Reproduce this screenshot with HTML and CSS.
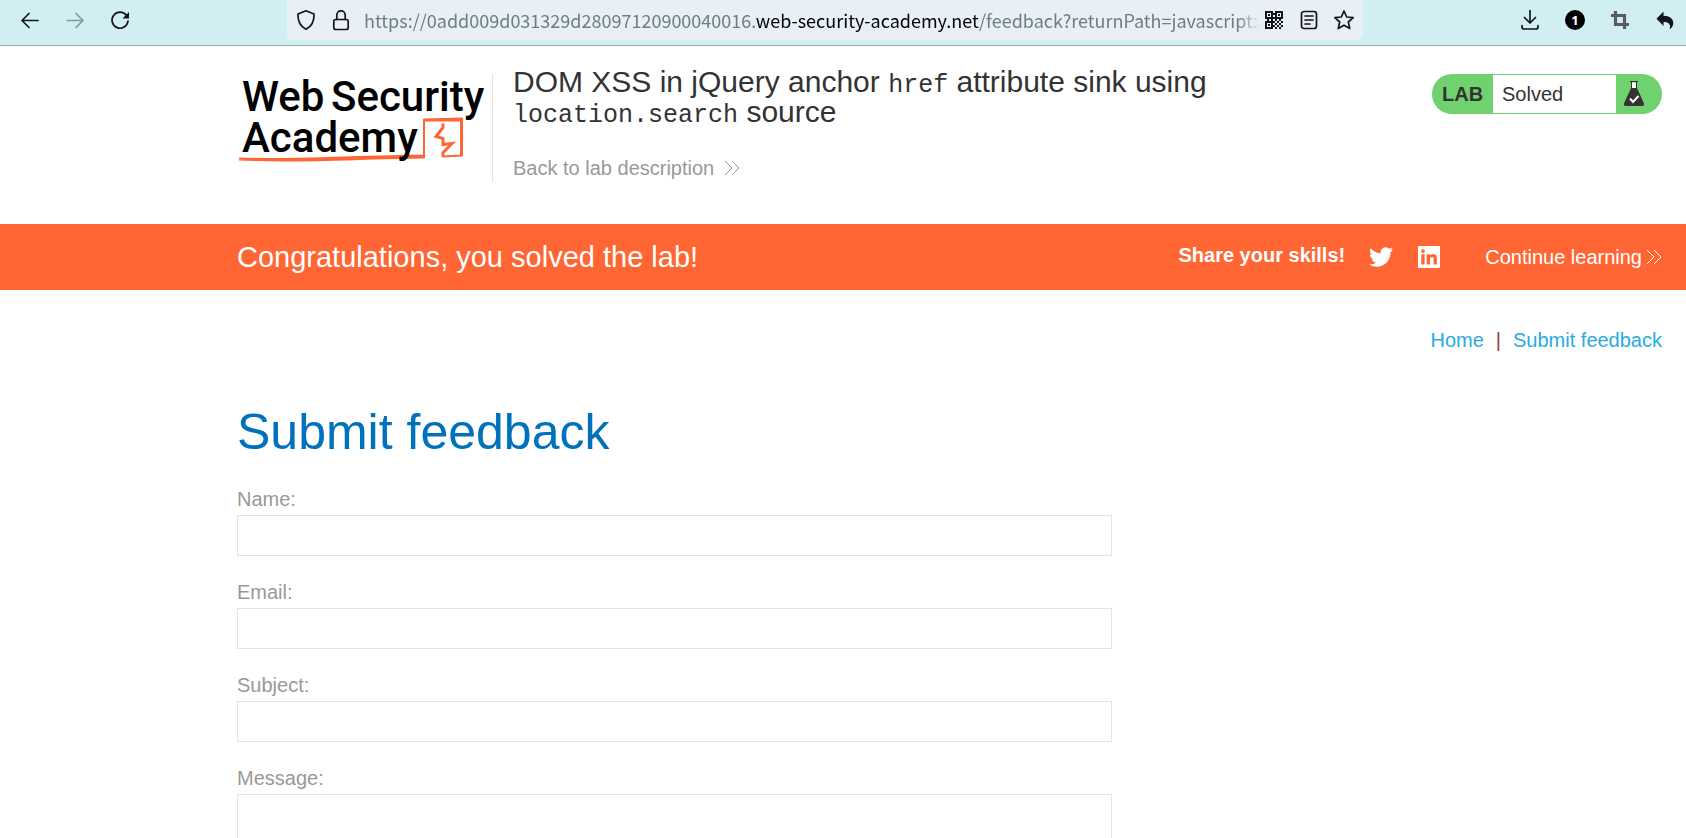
FILE: index.html
```html
<!DOCTYPE html>
<html lang="en">
<head>
<meta charset="utf-8">
<meta name="viewport" content="width=device-width, initial-scale=1">
<title>DOM XSS in jQuery anchor href attribute sink using location.search source</title>
<link rel="stylesheet" href="styles.css">
</head>
<body>
<div class="toolbar">
  <div class="tools">
    <button class="tool" type="button" aria-label="Back"><svg viewBox="0 0 24 24"><path class="line" d="M20 12.500H4M11 5.500L4 12.500l7 7"/></svg></button>
    <button class="tool tool-off" type="button" aria-label="Forward" disabled><svg viewBox="0 0 24 24"><path class="line" d="M4 12.500h16M13 5.500l7 7-7 7"/></svg></button>
    <button class="tool" type="button" aria-label="Reload"><svg viewBox="0 0 24 24"><path class="line" d="M18.500 7.500A8 8 0 1 0 20 13"/><path d="M21 4v6.500h-6.500z"/></svg></button>
  </div>
  <div class="address">
    <button class="tool" type="button" aria-label="Tracking protection"><svg viewBox="0 0 24 24"><path class="line" d="M12 2.800l8 3.200c.3 6.500-1.500 12-8 15.300C5.500 18 3.700 12.500 4 6z"/></svg></button>
    <button class="tool" type="button" aria-label="Connection security"><svg viewBox="0 0 24 24"><rect class="line" x="4.800" y="11.500" width="14.400" height="10" rx="2"/><path class="line" d="M7.800 11.500V7a4.200 4.200 0 0 1 8.400 0v4.500"/></svg></button>
    <div class="url" role="textbox" aria-label="Address" tabindex="0">https://0add009d031329d28097120900040016.<span class="url-host">web-security-academy.net</span>/feedback?returnPath=javascript:a</div>
    <button class="tool" type="button" aria-label="QR code"><svg viewBox="0 0 24 24" shape-rendering="crispEdges"><path d="M3 3h8v8H3zM13 3h8v8h-8zM3 13h8v8H3zM11 5h2v2h-2zM11 9h2v2h-2zM5 11h2v2H5zM9 11h2v2H9zM13 11h2v2h-2zM17 11h2v2h-2zM11 13h2v2h-2zM15 13h2v2h-2zM19 13h2v2h-2zM13 15h2v2h-2zM17 15h2v2h-2zM11 17h2v2h-2zM15 17h2v2h-2zM19 17h2v2h-2zM13 19h2v2h-2zM17 19h2v2h-2z"/><path class="paper" d="M5 5h4v4H5zM15 5h4v4h-4zM5 15h4v4H5z"/><path d="M6 6h2v2H6zM16 6h2v2h-2zM6 16h2v2H6z"/></svg></button>
    <button class="tool" type="button" aria-label="Reader view"><svg viewBox="0 0 24 24"><rect class="line" x="4.500" y="3.500" width="15" height="17" rx="2.500"/><path class="line" d="M8 8h8M8 12h8M8 16h5"/></svg></button>
    <button class="tool" type="button" aria-label="Bookmark"><svg viewBox="0 0 24 24"><path class="line" d="M12 3l2.700 6 6.500.7-4.900 4.300 1.500 6.500L12 17.200l-5.800 3.300L7.700 14 2.800 9.700 9.300 9z"/></svg></button>
  </div>
  <div class="tools">
    <button class="tool" type="button" aria-label="Downloads"><svg viewBox="0 0 24 24"><path class="line" d="M12 2.500V15M6.500 9.500l5.500 5.500 5.500-5.500M4 17.500v1.500a2 2 0 0 0 2 2h12a2 2 0 0 0 2-2v-1.500"/></svg></button>
    <button class="tool" type="button" aria-label="Containers"><span class="counter">1</span></button>
    <button class="tool tool-soft" type="button" aria-label="Capture"><svg viewBox="0 0 24 24"><path class="thick" d="M7.500 3v13.500H21M3 7.500h13.500V21"/></svg></button>
    <button class="tool" type="button" aria-label="Undo"><svg viewBox="0 0 24 24"><path d="M10.500 3.500v4.200c6 0 10 3 9.800 7.500-.1 2.500-1.500 4.800-3.800 6 1.800-4.500-.5-7.200-6-7.200v4L3.500 10.700z"/></svg></button>
  </div>
</div>

<header class="lab-header">
  <a class="logo" href="#" aria-label="Web Security Academy">
    <svg class="logo-art" viewBox="0 0 255 107">
      <path class="logo-line" d="M2 85c60 3 110-1 185-2V45l38-1v37l-20 1M2 84c50 2 110-2 185-3M186 46h39M224 46v36"/>
      <path class="logo-bolt" d="M206 49v4l-7 9 7 2v6l9-1-9 9v4"/>
      <text class="logo-text" x="5" y="36">Web</text>
      <text class="logo-text" x="94" y="36">Security</text>
      <text class="logo-text" x="5" y="77">Academy</text>
    </svg>
  </a>
  <div class="title">
    <h2 class="title-text">DOM XSS in jQuery anchor <code class="code">href</code> attribute sink using <code class="code">location.search</code> source</h2>
    <a class="back-link" href="#">Back to lab description <svg class="chevrons" viewBox="0 0 16 16"><path d="M1 1l7 7-7 7M8 1l7 7-7 7"/></svg></a>
  </div>
  <div class="badge">
    <span class="badge-tag">LAB</span>
    <span class="badge-state">Solved</span>
    <svg class="badge-flask" viewBox="0 0 20 26"><path class="flask-neck" d="M7.500 1.500h5V9h-5z"/><path class="flask-rim" d="M6 .500h8M7.500 1v7M12.500 1v7"/><path class="flask-body" d="M7 7h6l7 15.500q.5 2.500-2 2.500H2q-2.500 0-2-2.500z"/><path class="flask-tick" d="M6 17.500l3 3.500 5.500-6"/></svg>
  </div>
</header>

<section class="banner">
  <h4 class="banner-text">Congratulations, you solved the lab!</h4>
  <div class="share">
    <span class="share-label">Share your skills!</span>
    <a class="social" href="#" aria-label="Twitter"><svg viewBox="0 0 24 24"><path d="M23.950 4.570a10 10 0 0 1-2.820.770 4.960 4.960 0 0 0 2.160-2.720c-.95.550-2 .950-3.130 1.180a4.920 4.920 0 0 0-8.380 4.480C7.690 8.090 4.070 6.130 1.640 3.160a4.820 4.820 0 0 0-.67 2.480c0 1.710.87 3.210 2.190 4.100a4.900 4.900 0 0 1-2.230-.62v.06a4.920 4.920 0 0 0 3.950 4.830 5 5 0 0 1-2.210.08 4.940 4.940 0 0 0 4.600 3.420A9.870 9.870 0 0 1 0 19.540a13.990 13.990 0 0 0 7.550 2.210c9.050 0 13.990-7.500 13.990-13.980 0-.21 0-.42-.02-.63a9.940 9.940 0 0 0 2.460-2.550z"/></svg></a>
    <a class="social" href="#" aria-label="LinkedIn"><svg viewBox="0 0 24 24"><path fill-rule="evenodd" d="M2 1h20q1 0 1 1v20q0 1-1 1H2q-1 0-1-1V2q0-1 1-1zM4.300 9.300v10.300h3.300V9.300zM6 4.200a1.900 1.900 0 1 0 0 3.800 1.900 1.900 0 0 0 0-3.800zM9.700 9.300v10.300H13v-5.100c0-1.400.4-2.600 2-2.600s1.600 1.400 1.600 2.700v5h3.300V14c0-2.800-.7-4.900-3.900-4.900-1.500 0-2.600.8-3 1.600v-1.400z"/></svg></a>
  </div>
  <a class="continue" href="#">Continue learning <svg class="chevrons" viewBox="0 0 16 16"><path d="M1 1l7 7-7 7M8 1l7 7-7 7"/></svg></a>
</section>

<main class="page">
  <nav class="nav"><a class="nav-link" href="#">Home</a><span class="nav-bar">|</span><a class="nav-link" href="#">Submit feedback</a></nav>
  <h1 class="heading">Submit feedback</h1>
  <form class="form">
    <div class="field"><label for="name">Name:</label><input class="box" id="name" type="text"></div>
    <div class="field"><label for="email">Email:</label><input class="box" id="email" type="email"></div>
    <div class="field"><label for="subject">Subject:</label><input class="box" id="subject" type="text"></div>
    <div class="field"><label for="message">Message:</label><textarea class="box box-tall" id="message"></textarea></div>
  </form>
</main>
</body>
</html>
```

FILE: styles.css
```css
* { box-sizing: border-box; }

html { scrollbar-width: none; }

body {
  margin: 0;
  background: #fff;
  color: #333;
  font-family: "Liberation Sans", Arial, sans-serif;
  font-size: 20px;
  line-height: 24px;
}

a { text-decoration: none; }
h1, h2, h4 { margin: 0; font-weight: 400; }

/* Browser toolbar */
.toolbar {
  display: flex;
  justify-content: space-between;
  gap: 155px;
  height: 46px;
  padding: 0 9px 5px 18px;
  background: #d1eef2;
  border-bottom: 1px solid #93a8ad;
}
.tools { display: flex; align-items: center; gap: 21px; }
.tool {
  flex: none;
  display: grid;
  place-items: center;
  width: 24px;
  height: 24px;
  padding: 0;
  border: 0;
  background: none;
  color: #15141a;
}
.tool svg { width: 24px; height: 24px; fill: currentColor; }
.tool .line { fill: none; stroke: currentColor; stroke-width: 1.7; stroke-linecap: round; stroke-linejoin: round; }
.tool .thick { fill: none; stroke: currentColor; stroke-width: 3.2; }
.tool .paper { fill: #e8eff6; }
.tool-off { color: #86999c; }
.tool-soft { color: #5b5b66; }
.counter {
  width: 20px;
  height: 20px;
  border-radius: 50%;
  background: #000;
  color: #fff;
  font: 700 13px/20px "Open Sans", sans-serif;
  text-align: center;
}
.address {
  flex: 1;
  min-width: 0;
  display: flex;
  align-items: center;
  gap: 11px;
  padding: 0 7px;
  border-radius: 0 0 5px 5px;
  background: #e8eff6;
}
.url {
  flex: 1;
  min-width: 0;
  margin-right: -10px;
  overflow: hidden;
  white-space: nowrap;
  color: #6d7f83;
  font-family: "Noto Sans CJK SC", "Open Sans", sans-serif;
  font-size: 18px;
  mask-image: linear-gradient(to left, transparent, #000 24px);
}
.url-host { color: #000; }

/* Lab header */
.lab-header {
  display: flex;
  align-items: flex-start;
  padding: 28px 24px 42px 237px;
}
.logo { flex: none; width: 256px; border-right: 1px solid #e4e4e4; }
.logo-art { display: block; width: 255px; height: 108px; overflow: visible; }
.logo-text { font: 500 42px Roboto, sans-serif; fill: #000; }
.logo-line { fill: none; stroke: #f63; stroke-width: 2; stroke-linejoin: round; }
.logo-bolt { fill: none; stroke: #f63; stroke-width: 3; }
.title {
  flex: 1;
  display: flex;
  flex-direction: column;
  align-items: flex-start;
  gap: 29px;
  padding: 0 24px 0 20px;
  margin-top: -7px;
}
.title-text { font-size: 30px; line-height: 30px; }
.code { font-family: "Liberation Mono", monospace; font-size: 25px; line-height: 1px; }
.back-link { display: flex; align-items: center; gap: 10px; color: #999; }
.chevrons { width: 16px; height: 16px; fill: none; stroke: currentColor; stroke-width: 1; }
.badge {
  flex: none;
  display: flex;
  align-items: center;
  width: 230px;
  height: 40px;
  padding: 1px 18px 1px 10px;
  border-radius: 20px;
  background: #70d26e;
}
.badge-tag { width: 51px; font-weight: 700; }
.badge-state { flex: 1; margin-right: 8px; padding-left: 9px; background: #fff; line-height: 38px; }
.badge-flask { width: 20px; height: 26px; }
.flask-neck { fill: #fff; }
.flask-rim { fill: none; stroke: #333; }
.flask-body { fill: #333; }
.flask-tick { fill: none; stroke: #fff; stroke-width: 2; }

/* Solved banner */
.banner {
  display: flex;
  align-items: center;
  min-height: 66px;
  padding: 0 24px 0 237px;
  background: #f63;
  color: #fff;
}
.banner-text { flex: 1; font-size: 29px; line-height: 32px; }
.share { display: flex; align-items: center; gap: 24px; margin-right: 44px; }
.share-label { padding-bottom: 4px; font-weight: 700; }
.social { width: 24px; height: 24px; color: #fff; }
.social svg { display: block; fill: currentColor; }
.continue { display: flex; align-items: center; gap: 4px; color: #fff; }

/* Feedback page */
.page { padding: 38px 24px 40px 237px; }
.nav { display: flex; justify-content: flex-end; gap: 12px; }
.nav-link { color: #29abe2; }
.nav-bar { color: #8a4b2a; }
.heading { margin-top: 50px; color: #0071bc; font-size: 50px; line-height: 60px; }
.form { display: grid; gap: 24px; max-width: 875px; margin-top: 25px; }
.field { display: grid; gap: 4px; color: #999; }
.box {
  width: 100%;
  height: 41px;
  padding: 8px;
  border: 1px solid #e4e4e4;
  border-radius: 0;
  background: #fff;
  color: #333;
  font: inherit;
}
.box-tall { height: 240px; resize: none; }
```
